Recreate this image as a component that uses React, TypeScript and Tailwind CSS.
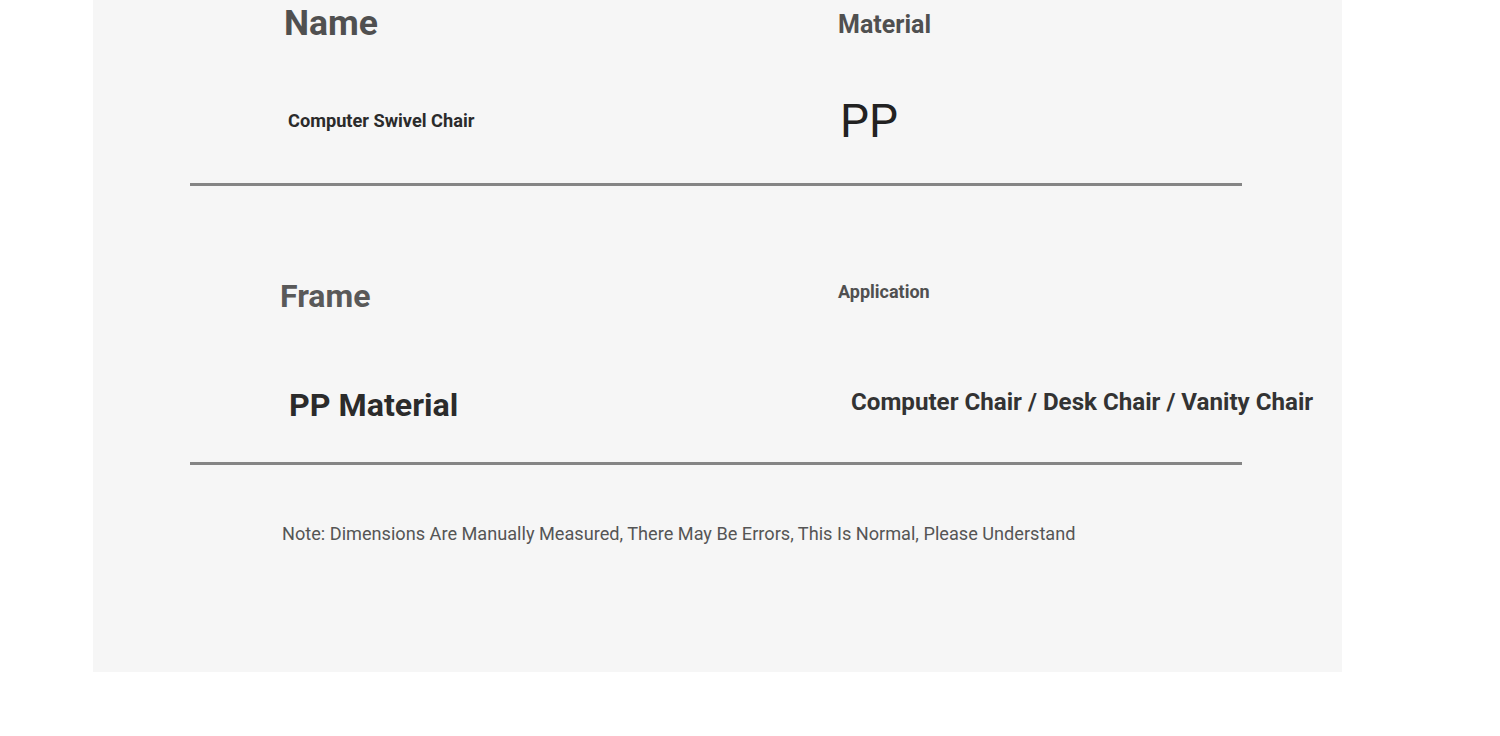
import React from 'react';

type Cell = { text: string; className: string };

const Row: React.FC<{ left: Cell; right: Cell; height: string }> = ({ left, right, height }) => (
  <div className={`grid grid-cols-[558px_1fr] pl-[92px] ${height}`}>
    <div className="flex items-center">
      <span className={`leading-none whitespace-nowrap ${left.className}`}>{left.text}</span>
    </div>
    <div className="flex items-center">
      <span className={`leading-none whitespace-nowrap ${right.className}`}>{right.text}</span>
    </div>
  </div>
);

export default function App() {
  return (
    <div className="min-h-[736px] bg-white font-['Roboto',sans-serif]">
      <div className="ml-[93px] h-[672px] w-[1249px] bg-[#f6f6f6] pl-[97px]">
        <div className="w-[1052px]">
          {/* Name / Material */}
          <Row
            height="h-[48px]"
            left={{ text: 'Name', className: 'ml-[2px] text-[35.5px] font-bold text-[#505050]' }}
            right={{ text: 'Material', className: 'ml-[-2px] text-[25px] font-bold text-[#505050]' }}
          />
          <div className="h-[48px]" />
          <Row
            height="h-[50px]"
            left={{ text: 'Computer Swivel Chair', className: 'ml-[6px] text-[18.2px] font-bold text-[#2b2b2b]' }}
            right={{ text: 'PP', className: 'text-[46px] font-normal text-[#222222]' }}
          />
          <div className="h-[37px]" />
          <div className="border-t-[3px] border-[#858585]" />

          {/* Frame / Application */}
          <div className="h-[86px]" />
          <Row
            height="h-[48px]"
            left={{ text: 'Frame', className: 'ml-[-2px] text-[32px] font-bold text-[#595959]' }}
            right={{ text: 'Application', className: 'ml-[-2px] mb-[8px] text-[18px] font-bold text-[#505050]' }}
          />
          <div className="h-[60px]" />
          <Row
            height="h-[50px]"
            left={{ text: 'PP Material', className: 'ml-[7px] text-[32.2px] font-bold text-[#2b2b2b]' }}
            right={{ text: 'Computer Chair / Desk Chair / Vanity Chair', className: 'ml-[11px] mb-[6px] text-[24.15px] font-bold text-[#333333]' }}
          />
          <div className="h-[32px]" />
          <div className="border-t-[3px] border-[#858585]" />

          {/* Note */}
          <div className="flex h-[140px] items-center pl-[92px]">
            <p className="mb-[2px] text-[18.15px] leading-none text-[#555555]">
              Note: Dimensions Are Manually Measured, There May Be Errors, This Is Normal, Please Understand
            </p>
          </div>
        </div>
      </div>
    </div>
  );
}
